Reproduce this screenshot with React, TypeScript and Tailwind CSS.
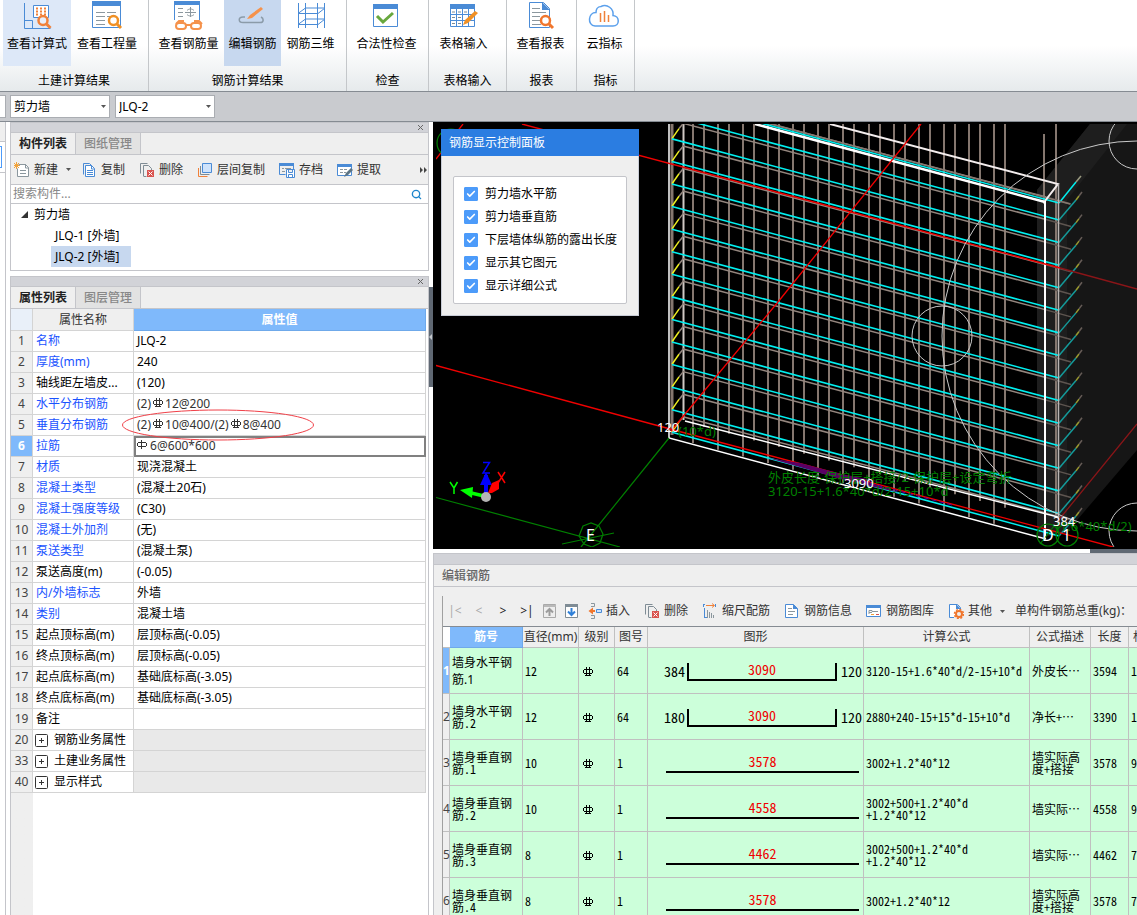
import { useState } from 'react';
import type { ReactNode } from 'react';
import { Check, Search } from 'lucide-react';
import clsx from 'clsx';

interface IconProps {
  className?: string;
}

interface PropertyRow {
  no: number;
  name: string;
  value?: ReactNode;
  blue?: boolean;
  group?: boolean;
}

interface RebarRow {
  name: string;
  diameter: number;
  code: number;
  left?: number;
  length: number;
  right?: number;
  formula: string[];
  description: string;
  total: number;
  extra: string;
}

// Rebar grade marks
const Grade3 = ({ className = '' }: IconProps) => (
  <svg className={clsx('inline-block h-[10px] w-[10px]', className)} viewBox="0 0 10 10" fill="none" stroke="currentColor" shapeRendering="crispEdges">
    <path d="M1 2.5h8M1 6.5h8M.5 3v3M9.5 3v3M3.5 0v9M6.5 0v9M2 8.5h6" />
  </svg>
);

const Grade1 = () => (
  <svg className="mb-1 inline-block h-[10px] w-[10px]" viewBox="0 0 10 10" fill="none" stroke="currentColor" shapeRendering="crispEdges">
    <path d="M1 2.5h8M1 6.5h8M.5 3v3M9.5 3v3M4.5 0v9" />
  </svg>
);

const properties: PropertyRow[] = [
  { no: 1, name: '名称', value: 'JLQ-2', blue: true },
  { no: 2, name: '厚度(mm)', value: '240', blue: true },
  { no: 3, name: '轴线距左墙皮...', value: '(120)' },
  { no: 4, name: '水平分布钢筋', value: <>(2)<Grade3 className="mx-0.5 mb-1" />12@200</>, blue: true },
  { no: 5, name: '垂直分布钢筋', value: <>(2)<Grade3 className="mx-0.5 mb-1" />10@400/(2)<Grade3 className="mx-0.5 mb-1" />8@400</>, blue: true },
  { no: 6, name: '拉筋', value: <><Grade1 /> 6@600*600</>, blue: true },
  { no: 7, name: '材质', value: '现浇混凝土', blue: true },
  { no: 8, name: '混凝土类型', value: '(混凝土20石)', blue: true },
  { no: 9, name: '混凝土强度等级', value: '(C30)', blue: true },
  { no: 10, name: '混凝土外加剂', value: '(无)', blue: true },
  { no: 11, name: '泵送类型', value: '(混凝土泵)', blue: true },
  { no: 12, name: '泵送高度(m)', value: '(-0.05)' },
  { no: 13, name: '内/外墙标志', value: '外墙', blue: true },
  { no: 14, name: '类别', value: '混凝土墙', blue: true },
  { no: 15, name: '起点顶标高(m)', value: '层顶标高(-0.05)' },
  { no: 16, name: '终点顶标高(m)', value: '层顶标高(-0.05)' },
  { no: 17, name: '起点底标高(m)', value: '基础底标高(-3.05)' },
  { no: 18, name: '终点底标高(m)', value: '基础底标高(-3.05)' },
  { no: 19, name: '备注' },
  { no: 20, name: '钢筋业务属性', group: true },
  { no: 33, name: '土建业务属性', group: true },
  { no: 40, name: '显示样式', group: true },
];

const rebars: RebarRow[] = [
  { name: '墙身水平钢筋.1', diameter: 12, code: 64, left: 384, length: 3090, right: 120, formula: ['3120-15+1.6*40*d/2-15+10*d'], description: '外皮长⋯', total: 3594, extra: '1' },
  { name: '墙身水平钢筋.2', diameter: 12, code: 64, left: 180, length: 3090, right: 120, formula: ['2880+240-15+15*d-15+10*d'], description: '净长+⋯', total: 3390, extra: '1' },
  { name: '墙身垂直钢筋.1', diameter: 10, code: 1, length: 3578, formula: ['3002+1.2*40*12'], description: '墙实际高度+搭接', total: 3578, extra: '9' },
  { name: '墙身垂直钢筋.2', diameter: 10, code: 1, length: 4558, formula: ['3002+500+1.2*40*d', '+1.2*40*12'], description: '墙实际⋯', total: 4558, extra: '9' },
  { name: '墙身垂直钢筋.3', diameter: 8, code: 1, length: 4462, formula: ['3002+500+1.2*40*d', '+1.2*40*12'], description: '墙实际⋯', total: 4462, extra: '7' },
  { name: '墙身垂直钢筋.4', diameter: 8, code: 1, length: 3578, formula: ['3002+1.2*40*12'], description: '墙实际高度+搭接', total: 3578, extra: '7' },
];

// ---------- ribbon icons ----------

const ribbonIcons: Record<string, ReactNode> = {
  calc: (
    <>
      <path d="M4.500 3v25.500h26M4.500 20.500h8v8" stroke="#4a8bd6" />
      <path d="M13.500 5.500h15v12h-15z" stroke="#4a8bd6" fill="#fff" />
      <path d="M16 8.500h2m2 0h2m2 0h2M16 11.500h2m2 0h2m2 0h2M16 14.500h2m2 0h2m2 0h2" stroke="#f0813a" strokeWidth="2" />
      <circle cx="23" cy="20.500" r="4.500" stroke="#f0813a" strokeWidth="2.500" fill="#e8effb" />
      <path d="M26.500 24l4 4" stroke="#f0813a" strokeWidth="3" />
    </>
  ),
  report: (
    <>
      <path d="M2.500 2h28v25.500h-28z" stroke="#4a8bd6" fill="#fff" />
      <path d="M2 1h29v5H2z" fill="#4a8bd6" />
      <path d="M6 12.500h9m2 0h9M6 16.500h9m2 0h4M6 20.500h9M6 24.500h9" stroke="#8b979e" />
      <circle cx="23.500" cy="20.500" r="4.500" stroke="#f09024" strokeWidth="2.500" fill="#fff" />
      <path d="M27 24l4 4" stroke="#f09024" strokeWidth="3" />
    </>
  ),
  glasses: (
    <>
      <path d="M3.500 20V2h25v18" stroke="#4a8bd6" fill="#fff" />
      <path d="M3 1h26v4H3z" fill="#4a8bd6" />
      <path d="M7 8.500h5M7 12.500h5M7 16.500h5M19.500 7v10M14 12.500h11M16 10.500c2-2 5-2 7 0M16 14.500c2 2 5 2 7 0" stroke="#8b979e" />
      <path d="M5 24l3-3h5M31 24l-3-3h-5" stroke="#f5924b" strokeWidth="2" />
      <rect x="5" y="23" width="10" height="6" rx="3" stroke="#f5924b" strokeWidth="2" />
      <rect x="20" y="23" width="10" height="6" rx="3" stroke="#f5924b" strokeWidth="2" />
      <path d="M15 25h5" stroke="#f5924b" strokeWidth="2" />
    </>
  ),
  edit: (
    <>
      <path d="M10 17H8c-5 0-5 5.500 0 5.500h17c4 0 4-4 1-5.500" stroke="#8b9ba9" strokeWidth="1.500" />
      <path d="M12 19l3-4L26 7l2 2-11 9z" fill="#f5924b" />
    </>
  ),
  grid3d: (
    <path d="M4.500 3v25M11.500 3v25M23.500 3v25M30.500 3v25M4 13.500h20l7-5.500H11.500L4 13.500M4 24.500h20l7-5.500H11.500L4 24.500" stroke="#4a8bd6" />
  ),
  check: (
    <>
      <path d="M4.500 4.500h24v22h-24z" stroke="#4a8bd6" fill="#fff" />
      <path d="M4 4h25v5H4z" fill="#4a8bd6" />
      <path d="M8 16l6 6 10-9" stroke="#68a83e" strokeWidth="3" />
    </>
  ),
  table: (
    <>
      <path d="M4.500 4.500h24v22h-24z" stroke="#4a8bd6" fill="#fff" />
      <path d="M4 4h25v5H4z" fill="#4a8bd6" />
      <path d="M4 14.500h25M4 20.500h25M10.500 9v17M16.500 9v17M22.500 9v17" stroke="#4a8bd6" />
      <path d="M6 12h3m3 0h3m3 0h3M6 17.500h3m3 0h3M6 23.500h3m3 0h3" stroke="#7d8b95" />
      <path d="M17 25l2-5 10-9 3 2-10 10z" fill="#f09024" />
    </>
  ),
  doc: (
    <>
      <path d="M6.500 2.500h14l6 6v19h-20z" stroke="#4a8bd6" fill="#fff" />
      <path d="M19 2l8 8h-8z" fill="#4a8bd6" />
      <path d="M9 8.500h8M9 12.500h14M9 16.500h8M9 20.500h8M9 24.500h9" stroke="#8b979e" />
      <circle cx="22.500" cy="20.500" r="4.500" stroke="#f0762d" strokeWidth="2.500" fill="#fff" />
      <path d="M26 24l4 4" stroke="#f0762d" strokeWidth="3" />
    </>
  ),
  cloud: (
    <>
      <path d="M8 26h18c7 0 7-10 0-10.500 1-7-6-12-12-9-4 0-5 4-5 6-8 0-9 13-1 13.500z" stroke="#5ba0ec" strokeWidth="1.500" fill="#fff" />
      <path d="M13.500 22v-9M17.500 22V11M21.500 22v-7" stroke="#f0813a" strokeWidth="1.500" />
    </>
  ),
};

const ribbonGroups = [
  { title: '土建计算结果', width: 'w-[149px]', pad: 'pr-1', items: [{ icon: 'calc', label: '查看计算式' }, { icon: 'report', label: '查看工程量' }] },
  { title: '钢筋计算结果', width: 'w-[198px]', pad: 'pr-0.5', items: [{ icon: 'glasses', label: '查看钢筋量' }, { icon: 'edit', label: '编辑钢筋' }, { icon: 'grid3d', label: '钢筋三维' }] },
  { title: '检查', width: 'w-[82px]', pad: 'pr-0.5', items: [{ icon: 'check', label: '合法性检查' }] },
  { title: '表格输入', width: 'w-[78px]', pad: 'pr-2', items: [{ icon: 'table', label: '表格输入' }] },
  { title: '报表', width: 'w-[70px]', pad: 'pr-0.5', items: [{ icon: 'doc', label: '查看报表' }] },
  { title: '指标', width: 'w-[58px]', pad: 'pr-0.5', items: [{ icon: 'cloud', label: '云指标' }] },
];

const Ribbon = () => (
  <header className="flex h-[92px] shrink-0 border-b border-[#858b92] bg-linear-to-b from-white from-50% to-[#e6eaec]">
    {ribbonGroups.map((group) => (
      <section key={group.title} className={clsx('flex shrink-0 flex-col border-r border-[#c4c7ca]', group.width)}>
        <div className={clsx('flex justify-center gap-0.5', group.pad)}>
          {group.items.map((item) => (
            <button
              key={item.label}
              className={clsx(
                'flex h-[66px] flex-col items-center px-1 whitespace-nowrap',
                item.icon === 'calc' && 'bg-[#dde8f8]',
                item.icon === 'edit' && 'bg-[#c7d8ef]',
              )}
            >
              <svg className="h-8 w-[34px]" viewBox="0 0 34 32" fill="none">
                {ribbonIcons[item.icon]}
              </svg>
              <span className="mt-0.5 leading-5">{item.label}</span>
            </button>
          ))}
        </div>
        <h2 className="mt-[5px] text-center leading-5">{group.title}</h2>
      </section>
    ))}
  </header>
);

const Arrow = ({ className = '' }: IconProps) => (
  <svg className={clsx('h-[3px] w-[5px]', className)} viewBox="0 0 5 3" fill="#555">
    <path d="M0 0h5L2.500 3z" />
  </svg>
);

const ComboBox = ({ label, value }: { label: string; value: string }) => (
  <div className="relative">
    <select aria-label={label} className="block h-[23px] w-[100px] appearance-none border border-[#aaadb2] bg-white pl-[3px] text-[12px]">
      <option>{value}</option>
    </select>
    <Arrow className="pointer-events-none absolute top-[10px] right-1" />
  </div>
);

// ---------- small toolbar icons ----------

const toolIcons: Record<string, ReactNode> = {
  new: (
    <>
      <path d="M4.500 2.500h7l3 3v9h-11v-8" stroke="#8b979e" fill="#fff" />
      <path d="M11.500 2v4h3M6 8.500h6M6 11.500h6" stroke="#8b979e" />
      <path d="M0 1l5 5M5 1L0 6M2.500 0v7M0 3.500h6" stroke="#f2a33a" />
    </>
  ),
  copy: (
    <>
      <path d="M2.500 12.500v-11h6l2 2" stroke="#4a8bd6" fill="none" />
      <path d="M4.500 3.500h6l3 3v8h-9z" stroke="#4a8bd6" fill="#fff" />
      <path d="M10.500 3v4h3M6 8.500h6M6 10.500h6M6 12.500h6" stroke="#4a8bd6" />
    </>
  ),
  remove: (
    <>
      <path d="M1.500 11.500v-10h7M4.500 14V3.500h5l3 3V8" stroke="#7f8c95" />
      <path d="M4.500 14.500h3" stroke="#7f8c95" />
      <path d="M8 8h7v7H8z" fill="#d9534f" />
      <path d="M9.500 9.500l4 4M13.500 9.500l-4 4" stroke="#fff" />
    </>
  ),
  floors: (
    <>
      <path d="M1.500 6v8.500h9" stroke="#f0813a" />
      <path d="M3.500 4v8.500h9" stroke="#7f8c95" />
      <path d="M5.500 1.500h9v9h-9z" stroke="#4a8bd6" fill="#cfe3fb" />
    </>
  ),
  archive: (
    <>
      <path d="M.5 1.500h14v6M.5 2v10.500h6" stroke="#4a8bd6" fill="none" />
      <path d="M0 1h15v3H0z" fill="#4a8bd6" />
      <path d="M3 6.500h2m1 0h6M3 9.500h3" stroke="#8b979e" />
      <path d="M7.500 7.500h8v8h-8zM9.500 7.500v3h4v-3M9.500 15v-2.500h4V15" stroke="#4a8bd6" fill="#fff" />
    </>
  ),
  extract: (
    <>
      <path d="M.5 2.500h14v11H.5z" stroke="#4a8bd6" fill="#fff" />
      <path d="M0 2h15v3H0z" fill="#4a8bd6" />
      <path d="M3 7.500h3m1 0h3M3 10.500h3m1 0h2" stroke="#8b979e" />
      <path d="M7 15l2-4 5-5 2 2-5 5z" fill="#5c7484" />
    </>
  ),
  up: (
    <>
      <path d="M1.500 1.500h12v13h-12z" stroke="#a9a9a9" fill="#eee" />
      <path d="M2 2h12v2H2z" fill="#b9b9b9" />
      <path d="M7.500 13V7M4 9.500L7.500 6 11 9.500" stroke="#9c9c9c" strokeWidth="2" />
    </>
  ),
  down: (
    <>
      <path d="M1.500 1.500h12v13h-12z" stroke="#7f8c95" fill="#fff" />
      <path d="M1 1h13v3H1z" fill="#7f8c95" />
      <path d="M7.500 5v6M4 8.500l3.500 3.500L11 8.500" stroke="#2f80d8" strokeWidth="2" />
    </>
  ),
  insert: (
    <>
      <path d="M5 .5h3.500v3H5M5 12.500h3.500v3H5" stroke="#8b979e" />
      <path d="M10.500 6.500h5v3h-5z" stroke="#4a8bd6" fill="#cfe3fb" />
      <path d="M5 8h4" stroke="#f0762d" strokeWidth="2" />
      <path d="M7 4.500v7L2.500 8z" fill="#f0762d" />
    </>
  ),
  scale: (
    <>
      <path d="M2.500 5v9.500M2 14.500h3M1 1.500h2M1.500 1v3" stroke="#4a8bd6" />
      <path d="M4 2.500h8M10 .5l2.500 2-2.500 2" stroke="#f0813a" />
      <path d="M5.500 7v8M7.500 9v6M9.500 10v5M11.500 12v3" stroke="#8b979e" />
      <path d="M13.500 1v3" stroke="#4a8bd6" />
    </>
  ),
  info: (
    <>
      <path d="M1.500 1.500h8l4 4v9h-12z" stroke="#4a8bd6" fill="#fff" />
      <path d="M9 1l5 5H9z" fill="#4a8bd6" />
      <path d="M4 5.500h4M4 8.500h7M4 11.500h5" stroke="#8b979e" />
    </>
  ),
  library: (
    <>
      <path d="M.5 2.500h14v11H.5z" stroke="#4a8bd6" fill="#fff" />
      <path d="M0 2h15v3H0z" fill="#4a8bd6" />
      <path d="M3 11V7.500h3v1h6M3 9.500h3" stroke="#8b979e" />
      <path d="M5 11.500h3" stroke="#f2a33a" />
      <path d="M10 11.500h3" stroke="#d9534f" />
    </>
  ),
  other: (
    <>
      <path d="M6 14.500H1.500v-13h8l3 3V7" stroke="#4a8bd6" fill="#fff" />
      <path d="M8 1l5 5H8z" fill="#4a8bd6" />
      <circle cx="11" cy="11" r="3" stroke="#f0762d" strokeWidth="2" />
      <circle cx="11" cy="11" r="4.500" stroke="#f0762d" strokeWidth="1.500" strokeDasharray="2 1.500" />
    </>
  ),
};

const ToolButton = ({ icon, label, menu }: { icon: string; label?: string; menu?: boolean }) => (
  <button className="flex shrink-0 items-center gap-1 whitespace-nowrap" aria-label={label ?? icon}>
    <svg className="h-4 w-4" viewBox="0 0 16 16" fill="none">
      {toolIcons[icon]}
    </svg>
    {label}
    {menu && <Arrow className="-mr-1 ml-1" />}
  </button>
);

const PanelBar = () => (
  <div className="flex h-[10px] shrink-0 items-center justify-end border-b border-[#c4c5ca] bg-[#d2d3d8] pr-1">
    <button aria-label="关闭">
      <svg className="h-[7px] w-[7px]" viewBox="0 0 7 7" stroke="#666">
        <path d="M1 1l5 5M6 1L1 6" />
      </svg>
    </button>
  </div>
);

const Tabs = ({ active, other }: { active: string; other: string }) => (
  <div className="flex h-[22px] shrink-0 border-b border-[#c4c5ca] bg-[#efefef] leading-[21px]" role="tablist">
    <button role="tab" aria-selected="true" className="w-[65px] border-r border-[#c4c5ca] font-bold text-[#222]">{active}</button>
    <button role="tab" aria-selected="false" className="w-[65px] border-r border-[#c4c5ca] bg-[#e2e2e2] font-medium text-[#888]">{other}</button>
  </div>
);

const ComponentPanel = () => (
  <section className="flex h-[149px] shrink-0 flex-col border border-[#c4c5ca] bg-white">
    <PanelBar />
    <Tabs active="构件列表" other="图纸管理" />
    <div className="flex h-[30px] shrink-0 items-center gap-3.5 border-b border-[#c4c5ca] bg-[#efefef] pl-[3px] text-[#333]">
      <ToolButton icon="new" label="新建" menu />
      <ToolButton icon="copy" label="复制" />
      <ToolButton icon="remove" label="删除" />
      <ToolButton icon="floors" label="层间复制" />
      <ToolButton icon="archive" label="存档" />
      <ToolButton icon="extract" label="提取" />
      <button className="ml-auto" aria-label="更多">
        <svg className="h-[6px] w-2" viewBox="0 0 8 6" fill="#444">
          <path d="M0 0l3 3-3 3zM4 0l3 3-3 3z" />
        </svg>
      </button>
    </div>
    <div className="flex h-[19px] shrink-0 items-center border-b border-[#c4c5ca] pr-1.5">
      <input aria-label="搜索构件" placeholder="搜索构件..." className="min-w-0 flex-1 pl-0.5 text-[12px] leading-[18px] outline-none placeholder:text-[#888]" />
      <Search size={11} strokeWidth={3} color="#1f86cc" />
    </div>
    <ul className="leading-[21px]">
      <li>
        <button className="flex items-center gap-1.5 pl-2.5">
          <svg className="h-[7px] w-[7px]" viewBox="0 0 7 7" fill="#333"><path d="M7 0v7H0z" /></svg>
          剪力墙
        </button>
        <ul className="flex flex-col items-start pl-10">
          <li><button className="px-1">JLQ-1 [外墙]</button></li>
          <li><button className="bg-[#c7d8ef] pr-3 pl-1">JLQ-2 [外墙]</button></li>
        </ul>
      </li>
    </ul>
  </section>
);

const PropertyPanel = () => (
  <section className="mt-[5px] flex min-h-0 flex-1 flex-col overflow-hidden border border-b-0 border-[#c4c5ca] bg-white">
    <PanelBar />
    <Tabs active="属性列表" other="图层管理" />
    <div className="flex-1 bg-linear-to-r from-[#efefef] from-[22px] to-white to-[22px] pr-0.5">
      <table className="w-full table-fixed border-separate border-spacing-0 leading-5">
        <colgroup>
          <col className="w-[22px]" />
          <col className="w-[101px]" />
          <col />
        </colgroup>
        <thead>
          <tr className="text-[#333]">
            <th className="h-[22px] border-r border-b border-[#d4d4d4] bg-[#e9f0f9] p-0" />
            <th className="border-r border-b border-[#d4d4d4] bg-[#efefef] p-0 font-normal">属性名称</th>
            <th className="border-r border-b border-[#6fa9ea] bg-[#7fb9fb] p-0 font-bold text-white">属性值</th>
          </tr>
        </thead>
        <tbody>
          {properties.map((row) => {
            const selected = row.no === 6;
            const rebar = row.no >= 4 && row.no <= 6;
            return (
              <tr key={row.no}>
                <td className={clsx('h-[21px] border-r border-b border-[#d4d4d4] p-0 text-center', selected ? 'bg-[#7fb9fb] font-bold text-white' : 'bg-[#efefef] text-[#444]')}>
                  {row.no}
                </td>
                <td className={clsx('border-r border-b border-[#d4d4d4] p-0 whitespace-nowrap', row.group ? 'pl-0.5' : 'pl-[3px]', row.blue && 'text-[#1a53ff]')}>
                  {row.group ? (
                    <button className="flex items-center gap-1.5">
                      <svg className="h-[13px] w-[13px]" viewBox="0 0 13 13" fill="none" stroke="#333">
                        <rect x=".5" y=".5" width="12" height="12" rx="1" />
                        <path d="M4 6.500h5M6.500 4v5" />
                      </svg>
                      {row.name}
                    </button>
                  ) : (
                    row.name
                  )}
                </td>
                <td
                  className={clsx(
                    'relative border-r border-b border-[#d4d4d4] p-0 pl-[3px] whitespace-nowrap',
                    row.group && 'bg-[#e9e9e9]',
                    rebar && 'text-[#333]',
                    selected && 'outline-2 -outline-offset-2 outline-[#808080]',
                  )}
                >
                  {row.value}
                  {row.no === 5 && (
                    <svg className="pointer-events-none absolute -top-1.5 -left-3 z-10 h-8 w-48" viewBox="0 0 192 32" fill="none">
                      <ellipse cx="96" cy="16" rx="95.500" ry="15" stroke="#f04048" />
                    </svg>
                  )}
                </td>
              </tr>
            );
          })}
        </tbody>
      </table>
    </div>
  </section>
);

// ---------- 3D view ----------

const PITCH = 22.57;
const frontBars = Array.from({ length: 13 }, (_, i) => 693 + Math.round(i * 25.08));
const backBars = Array.from({ length: 13 }, (_, i) => 704 + Math.round(i * 25.08));
const layers = Array.from({ length: 15 }, (_, i) => i * PITCH);

const WallModel = () => (
  <svg className="absolute inset-0 h-full w-full" viewBox="433 122 704 428" preserveAspectRatio="xMinYMin slice" fill="none">
    <defs>
      <clipPath id="scene">
        <path d="M436 124h704v423H436z" />
      </clipPath>
    </defs>
    <g clipPath="url(#scene)">
      <path d="M1090 124h47v326l-71 83-29 5V190z" fill="#161616" />
      <path d="M1090 124h37l-60 76v331l-30 7V190z" fill="#1e1e1e" />

      {/* vertical bars */}
      <g stroke="#85776f" strokeWidth="2">
        {backBars.map((x) => (
          <path key={x} d={`M${x} 124V${427 + (x - 704) * 0.268}`} />
        ))}
        {frontBars.map((x) => (
          <path key={x} d={`M${x} 124V${443 + (x - 693) * 0.268}`} />
        ))}
        <path d="M672 124v311" strokeWidth="3" />
        <path d="M1056 124v392" />
        <path d="M1044 134v70" />
      </g>
      <path d="M683.500 124v296" stroke="#cfc8c4" strokeWidth="2" />

      {/* horizontal bars with their hooks */}
      {layers.map((dy) => (
        <g key={dy}>
          <path d={`M684 ${417 - dy}L1046 ${513 - dy}`} stroke="#94867e" strokeWidth="1.500" />
          <path d={`M1046 ${513 - dy}l25 7`} stroke="#5e5550" strokeWidth="1.500" />
          <path d={`M679 ${422 - dy}l5-6`} stroke="#94867e" strokeWidth="1.500" />
          <path d={`M672 ${432 - dy}l7-10`} stroke="#f0f020" strokeWidth="1.500" />
          <path d={`M672 ${432.300 - dy}L1059 ${536 - dy}`} stroke="#00f0f0" strokeWidth="1.600" />
          <path d={`M1059 ${536 - dy}l17-20`} stroke="#149a9a" strokeWidth="1.500" />
          <path d={`M1076 ${516 - dy}l3-4`} stroke="#9a9a30" strokeWidth="1.500" />
          <path d={`M1079 ${512 - dy}l3-4`} stroke="#665c57" strokeWidth="1.500" />
        </g>
      ))}
      <path d="M1059 203l17-21" stroke="#00f0f0" strokeWidth="1.500" />
      <path d="M1076 182l5-6" stroke="#9a9a80" strokeWidth="1.500" />
      <path d="M755 119.500L1070 204" stroke="#85776f" strokeWidth="1.500" />

      {/* wall outline */}
      <path d="M669 124v314l377 101M685 421l373 96" stroke="#fff" strokeWidth="1.500" />
      <path d="M755 124l290 78" stroke="#fff" strokeWidth="2.500" />
      <path d="M755 121.500L1059 203" stroke="#00f0f0" strokeWidth="1.500" />
      <path d="M830 124l228 60-13 17" stroke="#f4eeee" strokeWidth="2" />
      <path d="M1045 201v338" stroke="#fff" strokeWidth="2" />
      <path d="M1058.500 184v340" stroke="#b8b4b2" strokeWidth="1.500" />

      {/* reference axes */}
      <g stroke="#f00000" strokeWidth="1.300">
        <path d="M522 124L780 193 1060 268M436 365.500L672 429.500 1113 547" />
        <path d="M921 124L780 299.500 671 431" />
        <path d="M463 124l-27 35" />
        <path d="M1060 268l77 21M1137 424l-80 98" stroke="#8a1518" />
      </g>
      <path d="M768 458l32 5 60 16 40 14-60-14-30-9zM790 464l92 18-36-4z" fill="#5a0064" />
      <path d="M862 481l44 12 46 12" stroke="#5a00a0" strokeDasharray="5 3" />

      <g stroke="#c8c8c8">
        <circle cx="1137" cy="336" r="195" />
        <circle cx="942" cy="336" r="30" />
        <circle cx="1137" cy="141" r="28" />
        <circle cx="1137" cy="531" r="28" />
      </g>

      <g stroke="#008000" strokeWidth="1.200">
        <path d="M436 497.500l184 49.500M669 438l-88 109M562 544l52-11" />
        <path d="M583 526l8-3 8 3 4 8-3 9-8 4-8-3-5-8z" />
        <circle cx="1048" cy="535" r="11" />
        <circle cx="1067" cy="535" r="11" />
        <path d="M1040 544l14-18" />
        <circle cx="451" cy="143" r="14" />
      </g>

      <g fill="#008000" fontSize="13">
        <text x="678" y="436">(10*d)</text>
        <text x="768" y="482">外皮长度-保护层+搭接/2-保护层+设定弯折</text>
        <text x="768" y="496">3120-15+1.6*40*d/2-15+10*d</text>
        <text x="1056" y="531">(1.6*40*d/2)</text>
      </g>
      <g fill="#fff" fontSize="13">
        <text x="657" y="432">120</text>
        <text x="844" y="488">3090</text>
        <text x="1053" y="526">384</text>
        <text x="586" y="541" fontSize="16">E</text>
        <text x="1042" y="541" fontSize="16">D</text>
        <text x="1062" y="541" fontSize="16">1</text>
      </g>

      {/* orientation gizmo */}
      <path d="M486 495v-20" stroke="#0000ff" strokeWidth="4" />
      <path d="M480 485l6-13 6 13z" fill="#0000ff" />
      <path d="M484 496l-17-4" stroke="#00ff00" strokeWidth="3.500" />
      <path d="M460 490l13-3-1 11z" fill="#00ff00" />
      <path d="M488 493l4-10 7-3v9l-7 4z" fill="#ff0000" />
      <circle cx="486" cy="497" r="5" fill="#b4b4b4" />
      <path d="M483 462.500h6.500l-6.500 10.500h7" stroke="#0000ff" strokeWidth="1.500" />
      <path d="M498 472l7 11M505 472l-7 11" stroke="#ff0000" strokeWidth="1.500" />
      <path d="M450 482l4 6 3.500-6M454 488v6" stroke="#00ff00" strokeWidth="1.500" />
    </g>
  </svg>
);

const displayOptions = ['剪力墙水平筋', '剪力墙垂直筋', '下层墙体纵筋的露出长度', '显示其它图元', '显示详细公式'];

const DisplayPanel = () => {
  const [enabled, setEnabled] = useState<string[]>(displayOptions);

  const toggle = (option: string) => {
    setEnabled(enabled.includes(option) ? enabled.filter((o) => o !== option) : [...enabled, option]);
  };

  return (
    <div className="absolute top-[7px] left-2 w-[198px] border border-[#c8ccd6] bg-[#efefef]">
      <h2 className="-mx-px -mt-px bg-[#2b7de1] pl-2 leading-[27px] text-white">钢筋显示控制面板</h2>
      <div className="mx-[11px] mt-5 mb-[11px] rounded-xs border border-[#c4c5ca] bg-white pt-[5px] pb-1.5 pl-2.5">
        {displayOptions.map((option) => (
          <label key={option} className="flex h-[23px] items-center gap-[7px] whitespace-nowrap">
            <span className="relative h-3.5 w-3.5">
              <input
                type="checkbox"
                checked={enabled.includes(option)}
                onChange={() => toggle(option)}
                className="block h-3.5 w-3.5 appearance-none rounded-[1px] border border-[#4c9bfa] bg-white checked:bg-[#4c9bfa]"
              />
              <Check size={10} strokeWidth={4} color="#fff" className="pointer-events-none absolute top-0.5 left-0.5" />
            </span>
            {option}
          </label>
        ))}
      </div>
    </div>
  );
};

// ---------- rebar editor ----------

const ShapeCell = ({ row }: { row: RebarRow }) => {
  if (row.left) {
    return (
      <div className="flex items-center pr-px pl-4 text-[14px] leading-4">
        <span className="w-[23px]">{row.left}</span>
        <span className="mt-0.5 h-[18px] flex-1 border-2 border-t-0 border-black text-center leading-3 text-[#f00000]">{row.length}</span>
        <span className="pl-1">{row.right}</span>
      </div>
    );
  }
  return (
    <div className="mr-1 ml-[18px] border-b-2 border-black pb-0.5 text-center text-[14px] leading-4 text-[#f00000]">
      {row.length}
    </div>
  );
};

const headers = ['直径(mm)', '级别', '图号', '图形', '计算公式', '公式描述', '长度', '根'];

const RebarTable = () => (
  <table className="w-full table-fixed border-separate border-spacing-0">
    <colgroup>
      <col className="w-[7px]" />
      <col className="w-[73px]" />
      <col className="w-14" />
      <col className="w-9" />
      <col className="w-[33px]" />
      <col className="w-[216px]" />
      <col className="w-[166px]" />
      <col className="w-[61px]" />
      <col className="w-[38px]" />
      <col />
    </colgroup>
    <thead>
      <tr className="text-[#333]">
        <th className="h-[21px] border-b border-[#c0c0c0] bg-white p-0" />
        <th className="border-r border-b border-[#6fa9ea] bg-[#7fb9fb] p-0 leading-5 font-bold text-white">筋号</th>
        {headers.map((title) => (
          <th key={title} className="overflow-hidden border-r border-b border-[#c0c0c0] bg-[#efefef] p-0 leading-5 font-normal whitespace-nowrap last:border-r-0 last:pl-1 last:text-left">
            {title}
          </th>
        ))}
      </tr>
    </thead>
    <tbody className="font-['Noto_Sans_CJK_SC',sans-serif] leading-3 [font-feature-settings:'hwid']">
      {rebars.map((row, index) => (
        <tr key={row.name} className="bg-[#ccffda] [&>td]:border-r [&>td]:border-b [&>td]:border-[#c0c0c0] [&>td:last-child]:border-r-0">
          <td className={clsx("h-[46px] p-0 text-center font-['Noto_Sans',sans-serif]", index === 0 ? 'bg-[#7fb9fb] font-bold text-white' : 'bg-[#efefef] text-[#444]')}>
            {index + 1}
          </td>
          <td className={clsx('p-0 pr-2 pl-0.5 break-all', index === 0 && "font-['Noto_Sans','Noto_Sans_CJK_SC',sans-serif] leading-[17px] [font-feature-settings:normal]")}>
            {row.name}
          </td>
          <td className="p-0 pl-0.5">{row.diameter}</td>
          <td className="p-0 pl-1"><Grade3 /></td>
          <td className="p-0 pl-0.5">{row.code}</td>
          <td className="p-0"><ShapeCell row={row} /></td>
          <td className="p-0 pl-0.5 whitespace-nowrap">
            {row.formula.map((line) => (
              <div key={line}>{line}</div>
            ))}
          </td>
          <td className="p-0 pr-2 pl-0.5 break-all">{row.description}</td>
          <td className="p-0 pl-0.5">{row.total}</td>
          <td className="overflow-hidden p-0 pl-0.5">{row.extra}</td>
        </tr>
      ))}
    </tbody>
  </table>
);

const navButtons = [
  { text: '|<', label: '首条', enabled: false },
  { text: '<', label: '上一条', enabled: false },
  { text: '>', label: '下一条', enabled: true },
  { text: '>|', label: '末条', enabled: true },
];

const RebarEditor = () => (
  <section className="flex min-h-0 flex-[361] flex-col overflow-hidden border-t border-l border-[#c4c5ca] bg-[#efefef]">
    <div className="h-[11px] shrink-0 border-b border-[#c4c5ca] bg-[#d2d3d8]" />
    <h2 className="h-[22px] shrink-0 border-b border-[#c4c5ca] pl-2 leading-[22px] font-medium text-[#666]">编辑钢筋</h2>
    <div className="mt-[9px] ml-2 flex min-h-0 flex-1 flex-col border-l border-[#a0a0a0]">
      <div className="flex h-[31px] shrink-0 items-center gap-3.5 overflow-hidden border-b border-[#858b92] text-[#333]">
        <div className="-mr-2 flex shrink-0 items-center">
          {navButtons.map((b) => (
            <button key={b.label} aria-label={b.label} disabled={!b.enabled} className={clsx('w-6', b.enabled ? 'text-[#222]' : 'text-[#aaa]')}>
              {b.text}
            </button>
          ))}
          <div className="flex gap-1.5 pl-[3px]">
            <ToolButton icon="up" />
            <ToolButton icon="down" />
          </div>
        </div>
        <ToolButton icon="insert" label="插入" />
        <ToolButton icon="remove" label="删除" />
        <ToolButton icon="scale" label="缩尺配筋" />
        <ToolButton icon="info" label="钢筋信息" />
        <ToolButton icon="library" label="钢筋图库" />
        <ToolButton icon="other" label="其他" menu />
        <span className="whitespace-nowrap">单构件钢筋总重(kg)：</span>
      </div>
      <RebarTable />
    </div>
  </section>
);

export default function App() {
  return (
    <div className="flex h-screen flex-col overflow-hidden bg-white font-['Noto_Sans','Noto_Sans_CJK_SC',sans-serif] text-[12px] text-black">
      <Ribbon />
      <div className="flex h-[30px] shrink-0 items-center gap-[5px] border-b border-[#858b92] bg-[#c9cbcf]">
        <div className="-mr-px h-[23px] w-[6px] border border-l-0 border-[#aaadb2] bg-white" />
        <ComboBox label="构件类型" value="剪力墙" />
        <ComboBox label="构件" value="JLQ-2" />
      </div>
      <main className="flex min-h-0 flex-1">
        <div className="flex w-[6px] shrink-0 flex-col border-r border-[#c4c5ca]">
          <div className="h-5 border-b border-[#c4c5ca] bg-[#efefef]" />
          <div className="mt-1 h-[22px] w-0.5 border border-l-0 border-[#4c9bfa]" />
          <div className="mt-1 border-b border-[#c4c5ca]" />
        </div>
        <div className="ml-1 flex w-[419px] shrink-0 flex-col">
          <ComponentPanel />
          <PropertyPanel />
        </div>
        <div className="w-1 shrink-0 pt-[165px]">
          <button aria-label="折叠" className="flex h-[100px] w-1 items-center bg-[#5f6873]">
            <svg className="h-[6px] w-[3px]" viewBox="0 0 3 6" fill="#c4c8cc"><path d="M3 0v6L0 3z" /></svg>
          </button>
        </div>
        <div className="flex min-w-0 flex-1 flex-col">
          <div className="flex min-h-0 flex-[432] flex-col">
            <div className="relative min-h-0 flex-1 overflow-hidden bg-black">
              <WallModel />
              <DisplayPanel />
            </div>
            <div className="flex h-1 shrink-0 justify-end">
              <div className="w-[47px] bg-[#5f6873]" />
            </div>
          </div>
          <RebarEditor />
        </div>
      </main>
    </div>
  );
}
